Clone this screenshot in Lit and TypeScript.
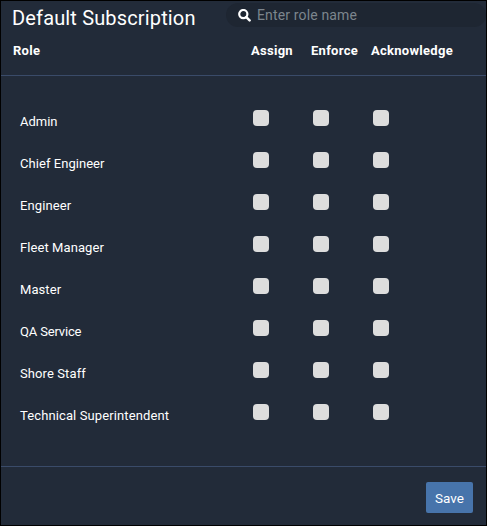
import { LitElement, html, css } from "lit";
import { customElement, state } from "lit/decorators.js";

interface Role {
  name: string;
  spacing: number;
}

@customElement("app-root")
export class AppRoot extends LitElement {
  static styles = css`
    :host {
      display: block;
      font-family: Roboto, "Noto Sans", sans-serif;
      font-size: 13px;
      color: #fff;
    }
    * { box-sizing: border-box; }
    .panel {
      width: 487px;
      height: 526px;
      border: 1px solid #000;
      background: #222b39;
      display: flex;
      flex-direction: column;
      overflow: hidden;
      white-space: nowrap;
    }
    .header {
      height: 75px;
      flex: none;
      border-bottom: 1px solid #3a4b69;
    }
    .top {
      display: flex;
      height: 37px;
      padding-top: 2px;
    }
    .title {
      margin: 0;
      width: 225px;
      padding-left: 11px;
      font-size: 20px;
      font-weight: 400;
      line-height: 30px;
      letter-spacing: 0.15px;
    }
    .search {
      width: 260px;
      height: 24px;
      border-radius: 12px;
      background: #1e2632;
      display: flex;
      align-items: center;
      padding-left: 12px;
    }
    .search svg { flex: none; margin-right: 6px; }
    .search input {
      flex: 1;
      min-width: 0;
      border: 0;
      padding: 0;
      outline: 0;
      background: none;
      color: #fff;
      font: 14px Roboto, "Noto Sans", sans-serif;
      letter-spacing: 0.15px;
    }
    .search input::placeholder { color: #7c858d; opacity: 1; }
    .grid {
      display: grid;
      grid-template-columns: 238px 60px 60px 1fr;
      padding-left: 12px;
    }
    .heads {
      font-weight: 700;
      line-height: 26px;
      letter-spacing: 0.28px;
    }
    .roles { flex: none; height: 391px; padding-top: 25px; border-bottom: 1px solid #3a4b69; }
    .role {
      height: 42px;
      padding-top: 9px;
    }
    .name { padding-left: 7px; line-height: 24px; }
    .check {
      appearance: none;
      width: 16px;
      height: 16px;
      margin: 0 0 0 2px;
      border-radius: 4px;
      background: #ddd;
    }
    .check:checked { background: #4774ab; }
    .footer {
      display: flex;
      justify-content: flex-end;
      padding: 15px 13px 0 0;
    }
    .save {
      width: 47px;
      height: 31px;
      padding: 0;
      border: 0;
      border-radius: 2px;
      background: #4774ab;
      color: #fff;
      font: 13.5px Roboto, "Noto Sans", sans-serif;
    }
  `;

  @state() private query = "";

  private roles: Role[] = [
    { name: "Admin", spacing: 0 },
    { name: "Chief Engineer", spacing: 0.05 },
    { name: "Engineer", spacing: 0.12 },
    { name: "Fleet Manager", spacing: 0.08 },
    { name: "Master", spacing: 0.08 },
    { name: "QA Service", spacing: -0.16 },
    { name: "Shore Staff", spacing: 0.1 },
    { name: "Technical Superintendent", spacing: 0.11 },
  ];

  private onSearch(e: Event) {
    this.query = (e.target as HTMLInputElement).value;
  }

  render() {
    const q = this.query.toLowerCase();
    const visible = this.roles.filter((r) => r.name.toLowerCase().includes(q));
    return html`
      <div class="panel">
        <div class="header">
          <div class="top">
            <h1 class="title">Default Subscription</h1>
            <label class="search">
              <svg width="13" height="13" viewBox="0 0 13 13" fill="none" stroke="#fff">
                <circle cx="5.3" cy="5.1" r="4.1" stroke-width="2.2" />
                <path d="M8.3 8.1L11.6 11.4" stroke-width="2.5" stroke-linecap="round" />
              </svg>
              <input placeholder="Enter role name" @input=${this.onSearch} />
            </label>
          </div>
          <div class="grid heads">
            <span>Role</span><span>Assign</span><span>Enforce</span><span>Acknowledge</span>
          </div>
        </div>
        <div class="roles">
          ${visible.map(
            (r) => html`<div class="grid role">
              <span class="name" style="letter-spacing:${r.spacing}px">${r.name}</span>
              ${["Assign", "Enforce", "Acknowledge"].map(
                (c) => html`<input class="check" type="checkbox" aria-label="${c} ${r.name}" />`
              )}
            </div>`
          )}
        </div>
        <div class="footer"><button class="save">Save</button></div>
      </div>
    `;
  }
}
